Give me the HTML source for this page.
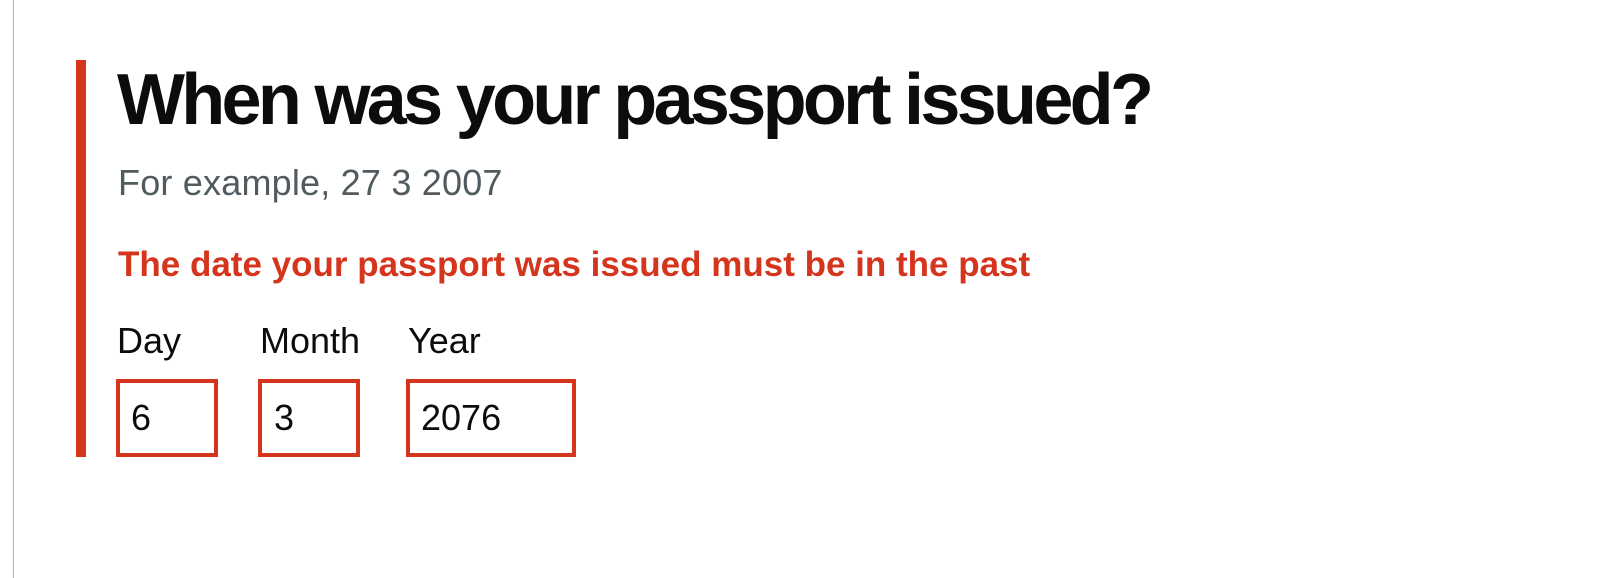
<!DOCTYPE html>
<html><head><meta charset="utf-8"><style>
html,body{margin:0;padding:0;background:#fff;width:1618px;height:578px;overflow:hidden;position:relative;font-family:"Liberation Sans",Arial,sans-serif;}
.a{position:absolute;line-height:1;white-space:nowrap;}
.line{position:absolute;left:13px;top:0;width:1px;height:578px;background:#b1b4b6;}
.bar{position:absolute;left:76px;top:60px;width:10px;height:397px;background:#d4351c;}
.box{position:absolute;top:379px;height:78px;border:4px solid #d4351c;box-sizing:border-box;}
</style></head><body>
<div class="line"></div>
<div class="bar"></div>
<div class="a" style="left:117px;top:64px;font-size:72px;font-weight:bold;color:#0b0c0c;letter-spacing:-3.7px;">When was your passport issued?</div>
<div class="a" style="left:118px;top:165px;font-size:36px;color:#505a5f;letter-spacing:0.2px;">For example, 27 3 2007</div>
<div class="a" style="left:118px;top:247px;font-size:35px;font-weight:bold;color:#d4351c;">The date your passport was issued must be in the past</div>
<div class="a" style="left:117px;top:323px;font-size:36px;color:#0b0c0c;">Day</div>
<div class="a" style="left:260px;top:323px;font-size:36px;color:#0b0c0c;">Month</div>
<div class="a" style="left:408px;top:323px;font-size:36px;color:#0b0c0c;">Year</div>
<div class="box" style="left:116px;width:102px;"></div>
<div class="box" style="left:258px;width:102px;"></div>
<div class="box" style="left:406px;width:170px;"></div>
<div class="a" style="left:131px;top:400px;font-size:36px;color:#0b0c0c;">6</div>
<div class="a" style="left:274px;top:400px;font-size:36px;color:#0b0c0c;">3</div>
<div class="a" style="left:421px;top:400px;font-size:36px;color:#0b0c0c;">2076</div>
</body></html>
